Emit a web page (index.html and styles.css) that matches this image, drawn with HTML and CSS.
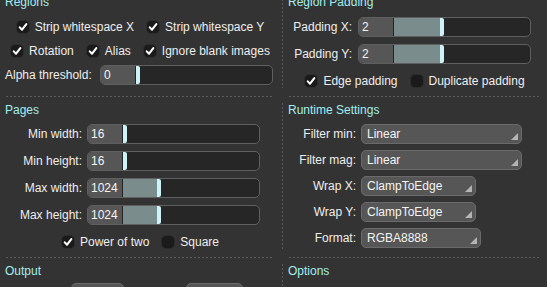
FILE: index.html
```html
<!DOCTYPE html>
<html lang="en">

<head>
    <meta charset="UTF-8">
    <meta name="viewport" content="width=device-width, initial-scale=1.0">
    <title>Texture Packer Settings</title>
    <link rel="stylesheet" href="styles.css">
</head>

<body>
    <div class="panel">
        <div class="row first">
            <section class="cell left">
                <h2 class="title">Regions</h2>
                <div class="checks top">
                    <label class="check"><span class="box on"><svg viewBox="0 0 14 14"><path d="M3.2 7.4 L5.9 10.2 L10.9 3.6"/></svg></span>Strip whitespace X</label>
                    <label class="check"><span class="box on"><svg viewBox="0 0 14 14"><path d="M3.2 7.4 L5.9 10.2 L10.9 3.6"/></svg></span>Strip whitespace Y</label>
                </div>
                <div class="checks">
                    <label class="check"><span class="box on"><svg viewBox="0 0 14 14"><path d="M3.2 7.4 L5.9 10.2 L10.9 3.6"/></svg></span>Rotation</label>
                    <label class="check"><span class="box on"><svg viewBox="0 0 14 14"><path d="M3.2 7.4 L5.9 10.2 L10.9 3.6"/></svg></span>Alias</label>
                    <label class="check"><span class="box on"><svg viewBox="0 0 14 14"><path d="M3.2 7.4 L5.9 10.2 L10.9 3.6"/></svg></span>Ignore blank images</label>
                </div>
                <div class="form alpha">
                    <span class="label">Alpha threshold:</span>
                    <div class="slider"><span class="num">0</span><span class="fill" style="width:0px"></span><span class="knob"></span></div>
                </div>
            </section>
            <section class="cell right">
                <h2 class="title">Region Padding</h2>
                <div class="form padding">
                    <span class="label">Padding X:</span>
                    <div class="slider"><span class="num">2</span><span class="fill" style="width:46px"></span><span class="knob"></span></div>
                    <span class="label">Padding Y:</span>
                    <div class="slider"><span class="num">2</span><span class="fill" style="width:46px"></span><span class="knob"></span></div>
                </div>
                <div class="checks pad-checks">
                    <label class="check"><span class="box on"><svg viewBox="0 0 14 14"><path d="M3.2 7.4 L5.9 10.2 L10.9 3.6"/></svg></span>Edge padding</label>
                    <label class="check"><span class="box"></span>Duplicate padding</label>
                </div>
            </section>
        </div>

        <div class="seps">
            <div class="sep left"></div>
            <div class="sep right"></div>
        </div>

        <div class="row">
            <section class="cell left">
                <h2 class="title">Pages</h2>
                <div class="form pages">
                    <span class="label">Min width:</span>
                    <div class="slider"><span class="num">16</span><span class="fill" style="width:0px"></span><span class="knob"></span></div>
                    <span class="label">Min height:</span>
                    <div class="slider"><span class="num">16</span><span class="fill" style="width:0px"></span><span class="knob"></span></div>
                    <span class="label">Max width:</span>
                    <div class="slider"><span class="num">1024</span><span class="fill" style="width:34px"></span><span class="knob"></span></div>
                    <span class="label">Max height:</span>
                    <div class="slider"><span class="num">1024</span><span class="fill" style="width:34px"></span><span class="knob"></span></div>
                </div>
                <div class="checks page-checks">
                    <label class="check"><span class="box on"><svg viewBox="0 0 14 14"><path d="M3.2 7.4 L5.9 10.2 L10.9 3.6"/></svg></span>Power of two</label>
                    <label class="check"><span class="box"></span>Square</label>
                </div>
            </section>
            <section class="cell right">
                <h2 class="title">Runtime Settings</h2>
                <div class="form runtime">
                    <span class="label">Filter min:</span>
                    <div class="select wide">Linear</div>
                    <span class="label">Filter mag:</span>
                    <div class="select wide">Linear</div>
                    <span class="label">Wrap X:</span>
                    <div class="select wrap">ClampToEdge</div>
                    <span class="label">Wrap Y:</span>
                    <div class="select wrap">ClampToEdge</div>
                    <span class="label">Format:</span>
                    <div class="select format">RGBA8888</div>
                </div>
            </section>
        </div>

        <div class="seps">
            <div class="sep left"></div>
            <div class="sep right"></div>
        </div>

        <div class="row">
            <section class="cell left">
                <h2 class="title">Output</h2>
                <div class="buttons">
                    <div class="button first-btn"></div>
                    <div class="button second-btn"></div>
                </div>
            </section>
            <section class="cell right">
                <h2 class="title">Options</h2>
            </section>
        </div>
    </div>
</body>

</html>
```

FILE: styles.css
```css
body {
    margin: 0;
    background-color: #333;
    font-family: 'Liberation Sans', Arial, sans-serif;
    font-size: 12px;
    color: #eee;
    overflow: hidden;
    height: 287px;
}

.panel {
    margin-top: -5px;
}

.row {
    display: flex;
}

.row.first {
    height: 93px;
}

.cell.left {
    width: 282px;
    flex: none;
}

.cell.right {
    flex: 1;
    padding-left: 6px;
    background: repeating-linear-gradient(to bottom, #5a5a5a 0 2px, transparent 2px 4px) left top / 1px 100% no-repeat;
}

.title {
    margin: 0;
    height: 14px;
    line-height: 14px;
    font-size: 12px;
    font-weight: normal;
    color: #a2eeee;
    padding-left: 5px;
}

.cell.right .title {
    padding-left: 0;
}

/* dashed separators */
.seps {
    display: flex;
    padding: 8px 0 6px;
}

.sep {
    height: 1px;
    background: repeating-linear-gradient(to right, #5a5a5a 0 2px, transparent 2px 4px);
}

.sep.left {
    margin-left: 6px;
    width: 268px;
}

.sep.right {
    margin-left: 15px;
    width: 251px;
}

/* checkboxes */
.checks {
    display: flex;
    justify-content: center;
    align-items: center;
    gap: 12px;
    height: 20px;
    margin-top: 4px;
    padding-right: 2px;
}

.checks.top {
    margin-top: 8px;
}

.check {
    display: flex;
    align-items: center;
    gap: 5px;
    white-space: nowrap;
}

.box {
    width: 14px;
    height: 14px;
    box-sizing: border-box;
    border-radius: 5px;
    background-color: #1a1a1a;
    border: 1px solid #2c2c2c;
    display: flex;
}

.box svg {
    width: 12px;
    height: 12px;
}

.box path {
    fill: none;
    stroke: #fff;
    stroke-width: 2.4;
    stroke-linecap: round;
    stroke-linejoin: round;
}

.pad-checks {
    height: 14px;
    margin-top: 10px;
    padding-right: 7px;
    margin-left: 1px;
}

.page-checks {
    height: 14px;
    margin-top: 10px;
}

/* label / control grids */
.form {
    display: grid;
    align-items: center;
    row-gap: 7px;
}

.form .label {
    text-align: right;
    white-space: nowrap;
}

.alpha {
    grid-template-columns: 90px 173px;
    column-gap: 5px;
    padding-left: 5px;
    margin-top: 4px;
}

.alpha .label {
    text-align: left;
}

.pages {
    grid-template-columns: 77px 173px;
    column-gap: 5px;
    padding-left: 5px;
    margin-top: 7px;
}

.padding {
    grid-template-columns: 64px 173px;
    column-gap: 6px;
    margin-top: 8px;
}

.runtime {
    grid-template-columns: 68px auto;
    column-gap: 5px;
    row-gap: 6px;
    margin-top: 7px;
    justify-items: start;
}

.runtime .label {
    justify-self: end;
}

/* slider with number */
.slider {
    display: flex;
    width: 173px;
    height: 20px;
    box-sizing: border-box;
    border: 1px solid #5f5f5f;
    border-radius: 5px;
    background-color: #262626;
    overflow: hidden;
}

.num {
    width: 31px;
    flex: none;
    padding-left: 3px;
    line-height: 18px;
    background-color: #565656;
    color: #f4f4f4;
}

.fill {
    flex: none;
    background-color: #7a8c8c;
    border-left: 1px solid #242424;
}

.knob {
    width: 4px;
    flex: none;
    background-color: #cdf2f7;
    border-radius: 0 2px 2px 0;
}

/* select boxes */
.select {
    position: relative;
    height: 20px;
    box-sizing: border-box;
    padding-left: 5px;
    line-height: 18px;
    background-color: #565656;
    border: 1px solid #6a6a6a;
    border-radius: 5px;
    color: #f4f4f4;
}

.select::after {
    content: "";
    position: absolute;
    right: 3px;
    bottom: 3px;
    width: 7px;
    height: 7px;
    background-color: #b4b4b4;
    clip-path: polygon(100% 0, 100% 100%, 0 100%);
}

.select.wide {
    width: 161px;
}

.select.wrap {
    width: 115px;
}

.select.format {
    width: 120px;
}

/* output buttons */
.buttons {
    display: flex;
    margin-top: 5px;
    padding-left: 71px;
    gap: 62px;
}

.button {
    height: 20px;
    box-sizing: border-box;
    background-color: #565656;
    border: 1px solid #6a6a6a;
    border-radius: 5px;
}

.first-btn {
    width: 53px;
}

.second-btn {
    width: 57px;
}
```
